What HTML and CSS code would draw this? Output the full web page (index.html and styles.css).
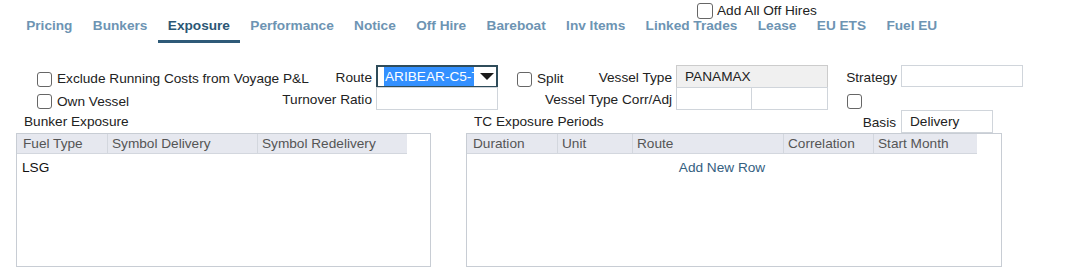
FILE: index.html
```html
<!DOCTYPE html>
<html lang="en">
<head>
<meta charset="utf-8">
<title>Exposure</title>
<link rel="stylesheet" href="styles.css">
</head>
<body>
<div class="topbar">
  <label class="check"><input type="checkbox"><span>Add All Off Hires</span></label>
</div>
<nav class="tabs">
  <a class="tab">Pricing</a>
  <a class="tab">Bunkers</a>
  <a class="tab active">Exposure</a>
  <a class="tab">Performance</a>
  <a class="tab">Notice</a>
  <a class="tab">Off Hire</a>
  <a class="tab">Bareboat</a>
  <a class="tab">Inv Items</a>
  <a class="tab">Linked Trades</a>
  <a class="tab">Lease</a>
  <a class="tab">EU ETS</a>
  <a class="tab">Fuel EU</a>
</nav>

<section class="form">
  <label class="check c1"><input type="checkbox"><span>Exclude Running Costs from Voyage P&amp;L</span></label>
  <span class="lbl c2">Route</span>
  <div class="select c3">
    <span class="sel-clip"><span class="sel-text">ARIBEAR-C5-TC</span></span>
    <span class="caret"></span>
  </div>
  <div class="c5 split-cell">
    <label class="check"><input type="checkbox"><span>Split</span></label>
    <span class="lbl">Vessel Type</span>
  </div>
  <div class="field ro c6">PANAMAX</div>
  <span class="lbl c8">Strategy</span>
  <div class="field c9 short"></div>

  <label class="check c1"><input type="checkbox"><span>Own Vessel</span></label>
  <span class="lbl c2">Turnover Ratio</span>
  <div class="field c3 r2"></div>
  <span class="lbl c5">Vessel Type Corr/Adj</span>
  <div class="pair c6 r2"><div class="field"></div><div class="field"></div></div>
  <label class="check c8 solo"><input type="checkbox"></label>
</section>

<section class="panels">
  <div class="panel left">
    <div class="panel-title"><span>Bunker Exposure</span></div>
    <div class="grid">
      <div class="grid-head">
        <div class="col w90 first">Fuel Type</div>
        <div class="col w150">Symbol Delivery</div>
        <div class="col w150">Symbol Redelivery</div>
      </div>
      <div class="grid-row">LSG</div>
    </div>
  </div>
  <div class="panel right">
    <div class="panel-title">
      <span>TC Exposure Periods</span>
      <div class="basis"><span class="lbl">Basis</span><div class="field basis-field">Delivery</div></div>
    </div>
    <div class="grid">
      <div class="grid-head">
        <div class="col w90 first">Duration</div>
        <div class="col w75">Unit</div>
        <div class="col w151">Route</div>
        <div class="col w90">Correlation</div>
        <div class="col w104">Start Month</div>
      </div>
      <div class="grid-row add-row">Add New Row</div>
    </div>
  </div>
</section>
</body>
</html>
```
FILE: styles.css
```css
* { box-sizing: border-box; }

body {
  margin: 0;
  width: 1066px;
  height: 280px;
  overflow: hidden;
  background: #ffffff;
  font-family: "Liberation Sans", Arial, sans-serif;
  font-size: 13.65px;
  line-height: 16px;
  color: #222222;
}

/* checkbox */
.check {
  display: flex;
  align-items: center;
  gap: 5px;
  white-space: nowrap;
}
.check input {
  appearance: none;
  -webkit-appearance: none;
  width: 15px;
  height: 15px;
  margin: 0;
  border: 1.5px solid #666666;
  border-radius: 3px;
  background: #fff;
  flex: none;
}

/* top bar */
.topbar {
  height: 18px;
  padding: 3px 0 0 697px;
}
.topbar .check { height: 16px; gap: 4px; }
.topbar .check input { width: 16px; height: 16px; }

/* tabs */
.tabs {
  display: flex;
  padding-left: 16px;
}
.tab {
  padding: 0 10.2px 6px;
  line-height: 16px;
  border-bottom: 3px solid transparent;
  font-weight: bold;
  color: #6d94b3;
  white-space: nowrap;
}
.tab.active {
  color: #2b5775;
  border-bottom-color: #2e5a78;
}

/* form */
.form {
  margin-top: 22px;
  padding-left: 37px;
  display: grid;
  grid-template-columns: 241px 98px 122px 19px 159px 152px 18px 55px 122px;
  grid-template-rows: 23px 22px;
  align-items: center;
}
.c1 { grid-column: 1; }
.c2 { grid-column: 2; }
.c3 { grid-column: 3; }
.c5 { grid-column: 5; }
.c6 { grid-column: 6; }
.c8 { grid-column: 8; }
.c9 { grid-column: 9; }

.form > .check { margin-top: 5px; }
.form > .check.solo { margin-top: 4px; margin-left: 1px; }

.lbl {
  text-align: right;
  padding-right: 4px;
  padding-top: 2px;
  white-space: nowrap;
  color: #222;
}
.split-cell {
  display: flex;
  justify-content: space-between;
  align-items: center;
  height: 100%;
}
.split-cell .check { margin-top: 5px; }

.field {
  height: 100%;
  border: 1px solid #d0d5db;
  background: #fff;
  padding: 0 8px;
  display: flex;
  align-items: center;
  white-space: nowrap;
}
.field.ro {
  background: #f0f0f0;
  border-color: #cccccc;
}
.field.short { height: 22px; align-self: start; }
.r2 { margin-top: -1px; height: calc(100% + 1px); }

.pair { display: flex; }
.pair .field { width: 76px; height: 100%; }
.pair .field + .field { margin-left: -1px; width: 77px; }

.select {
  height: 100%;
  border: 2px solid #2f4c5a;
  background: #fff;
  display: flex;
  align-items: center;
  padding-left: 6px;
}
.sel-clip {
  width: 90px;
  height: 19px;
  overflow: hidden;
  display: block;
  flex: none;
}
.sel-text {
  display: inline-block;
  height: 19px;
  line-height: 19px;
  background: #3390ff;
  color: #ffffff;
  white-space: nowrap;
  padding-left: 1px;
}
.caret {
  margin-left: 6px;
  width: 0;
  height: 0;
  border-left: 7px solid transparent;
  border-right: 7px solid transparent;
  border-top: 7px solid #1a1a1a;
}

/* panels */
.panels {
  display: flex;
  gap: 35px;
  padding-left: 16px;
}
.panel.left { width: 415px; }
.panel.right { width: 536px; }

.panel-title {
  height: 23px;
  display: flex;
  align-items: center;
  justify-content: space-between;
  padding: 0 8px;
  color: #222;
}
.panel.right .panel-title { padding-right: 9px; }
.basis { display: flex; align-items: center; height: 100%; }
.basis .lbl { padding-right: 5px; }
.basis-field { width: 92px; }

.grid {
  height: 134px;
  border: 1px solid #c8cdd4;
  background: #fff;
}
.grid-head {
  display: flex;
  height: 20px;
  border-bottom: 1px solid #d3d7de;
  width: max-content;
}
.col {
  background: #e6e8ef;
  color: #555555;
  padding-left: 4px;
  border-left: 1px solid #d3d7de;
  display: flex;
  align-items: center;
  white-space: nowrap;
}
.col.first { border-left: none; padding-left: 6px; }
.w90 { width: 90px; }
.w75 { width: 75px; }
.w104 { width: 104px; }
.w150 { width: 150px; }
.w151 { width: 151px; }
.grid-row {
  padding: 6px 5px 0;
  color: #111;
}
.add-row {
  width: 510px;
  text-align: center;
  color: #34607f;
}
```
